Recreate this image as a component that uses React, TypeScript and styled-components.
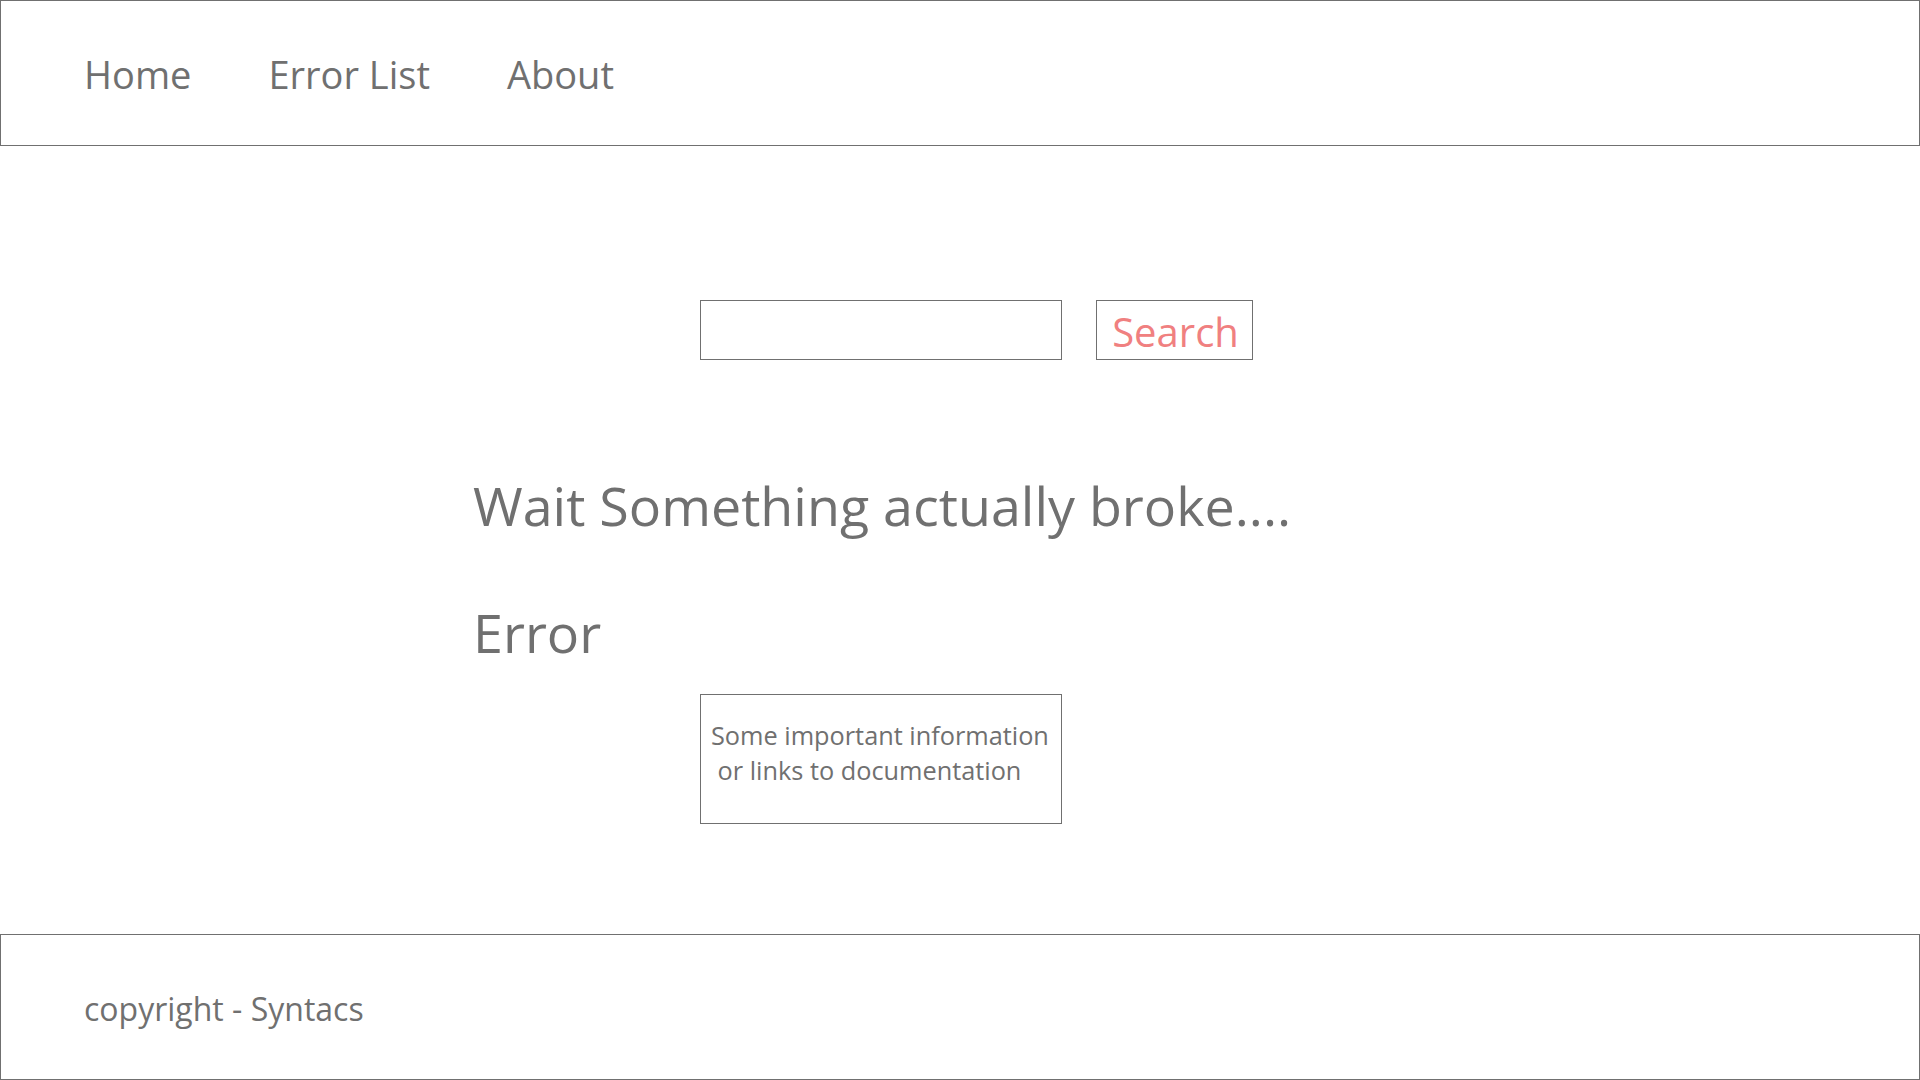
import React from "react";
import styled, { createGlobalStyle } from "styled-components";

const GlobalStyle = createGlobalStyle`
  html, body {
    margin: 0;
    padding: 0;
    background: #ffffff;
  }
  body {
    font-family: "Open Sans", "Noto Sans", "Liberation Sans", sans-serif;
    color: #707070;
  }
  * { box-sizing: border-box; }
`;

const Page = styled.div`
  min-height: 100vh;
  display: flex;
  flex-direction: column;
`;

const Header = styled.header`
  height: 146px;
  border: 1px solid #707070;
  display: flex;
  align-items: center;
  padding-left: 83px;
`;

const Nav = styled.nav`
  display: flex;
  align-items: center;
  gap: 77px;
`;

const NavLink = styled.a`
  font-size: 38px;
  color: #707070;
  text-decoration: none;
  line-height: 1;
  padding-top: 2px;
  cursor: pointer;
`;

const Main = styled.main`
  flex: 1;
  display: flex;
  flex-direction: column;
  padding: 154px 0 0 473px;
`;

const SearchRow = styled.form`
  display: flex;
  gap: 34px;
  margin-left: 227px;
`;

const SearchInput = styled.input`
  width: 362px;
  height: 60px;
  border: 1px solid #707070;
  border-radius: 0;
  padding: 0 10px;
  font: inherit;
  font-size: 24px;
  color: #707070;
  outline: none;
`;

const SearchButton = styled.button`
  width: 157px;
  height: 60px;
  border: 1px solid #707070;
  border-radius: 0;
  background: #ffffff;
  color: #f08080;
  font-family: inherit;
  font-size: 40px;
  line-height: 1;
  padding: 3px 0 0 2px;
  display: flex;
  align-items: center;
  justify-content: center;
  cursor: pointer;
`;

const Heading = styled.h1<{ $gap: number }>`
  margin: ${(p) => p.$gap}px 0 0;
  font-size: 53.8px;
  font-weight: 400;
  line-height: 64px;
  color: #707070;
`;

const InfoBox = styled.div`
  margin: 30px 0 0 227px;
  width: 362px;
  height: 130px;
  border: 1px solid #707070;
  padding: 23px 10px 0;
  font-size: 25.3px;
  line-height: 35px;
  white-space: pre;
  color: #707070;
`;

const Footer = styled.footer`
  height: 146px;
  border: 1px solid #707070;
  display: flex;
  align-items: center;
  padding-left: 83px;
  padding-top: 2px;
  font-size: 32px;
  color: #707070;
`;

export default function App() {
  return (
    <Page>
      <GlobalStyle />
      <Header>
        <Nav>
          <NavLink>Home</NavLink>
          <NavLink>Error List</NavLink>
          <NavLink>About</NavLink>
        </Nav>
      </Header>
      <Main>
        <SearchRow onSubmit={(e) => e.preventDefault()}>
          <SearchInput type="text" />
          <SearchButton type="submit">Search</SearchButton>
        </SearchRow>
        <Heading $gap={113}>Wait Something actually broke....</Heading>
        <Heading $gap={63}>Error</Heading>
        <InfoBox>{"Some important information\n or links to documentation"}</InfoBox>
      </Main>
      <Footer>copyright - Syntacs</Footer>
    </Page>
  );
}
